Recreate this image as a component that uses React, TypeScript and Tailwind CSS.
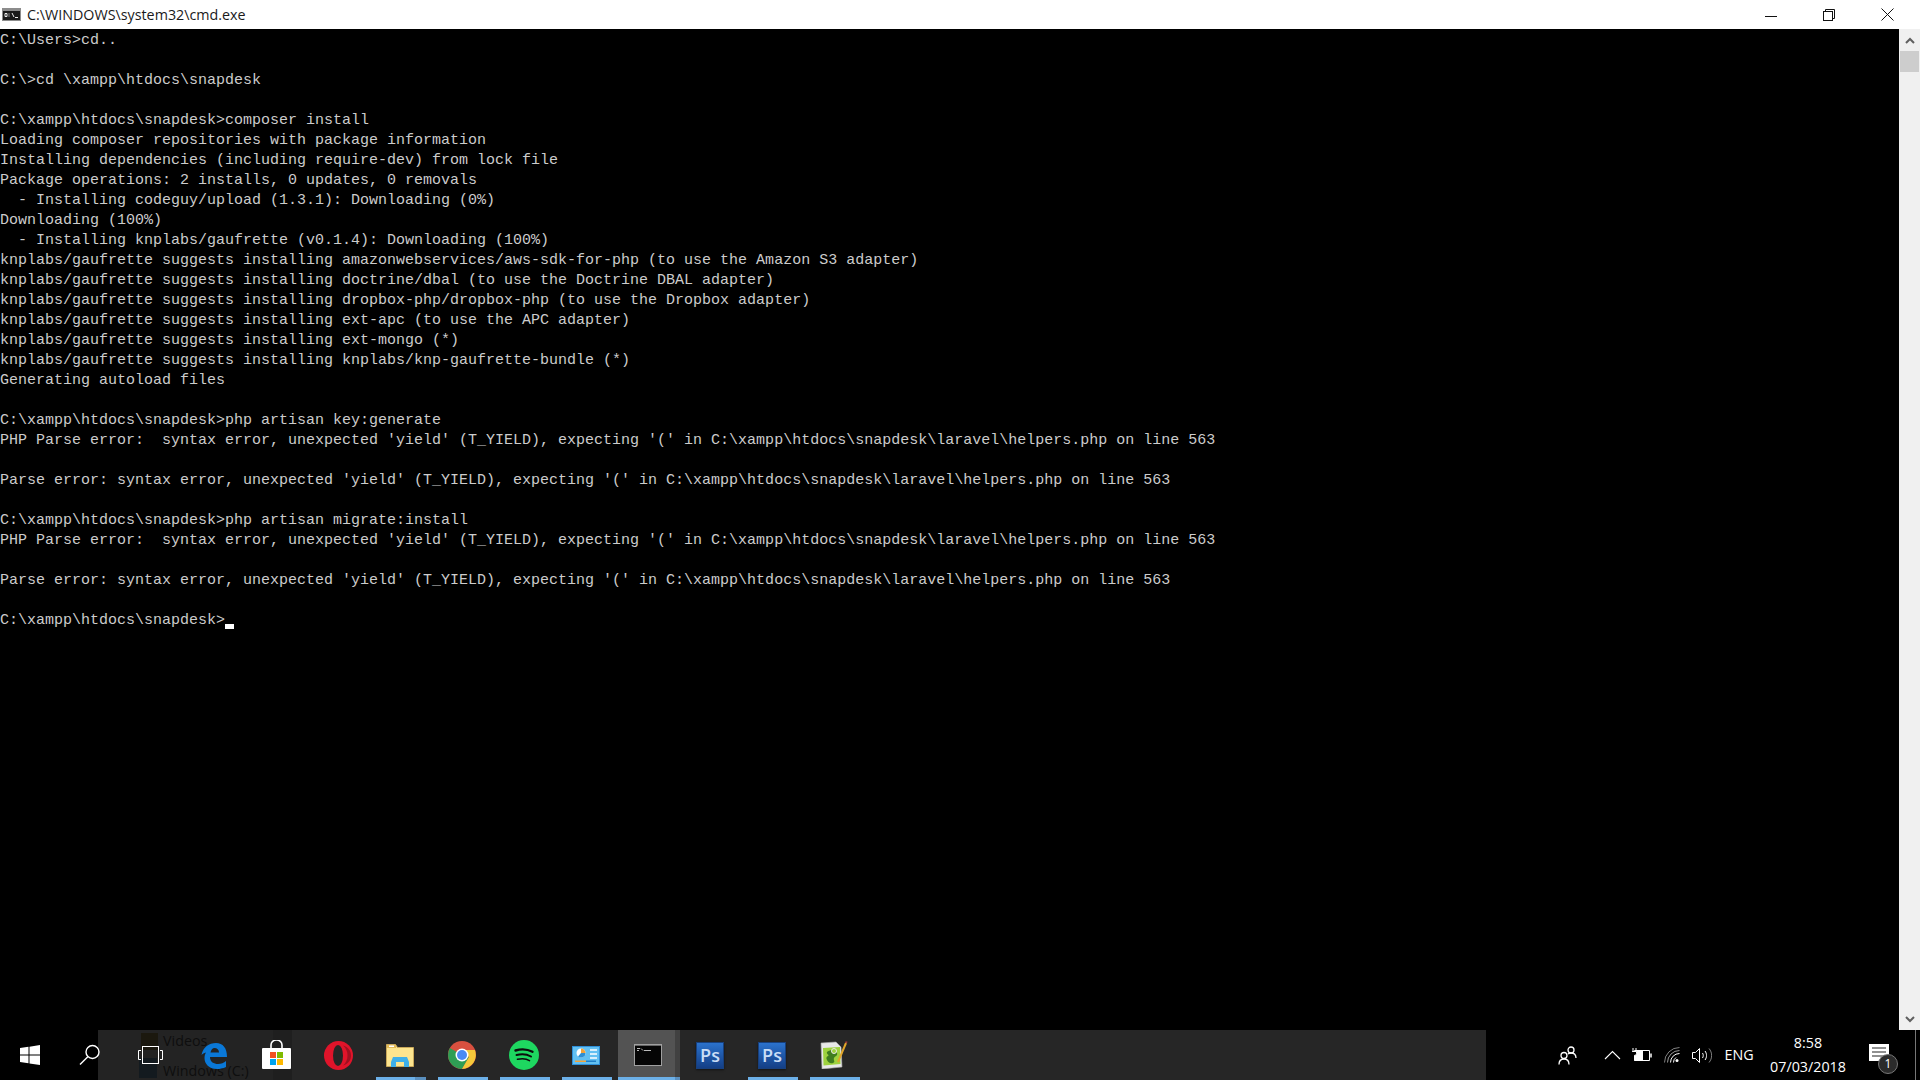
import React from 'react';

const lines = [
  'C:\\Users>cd..',
  '',
  'C:\\>cd \\xampp\\htdocs\\snapdesk',
  '',
  'C:\\xampp\\htdocs\\snapdesk>composer install',
  'Loading composer repositories with package information',
  'Installing dependencies (including require-dev) from lock file',
  'Package operations: 2 installs, 0 updates, 0 removals',
  '  - Installing codeguy/upload (1.3.1): Downloading (0%)',
  'Downloading (100%)',
  '  - Installing knplabs/gaufrette (v0.1.4): Downloading (100%)',
  'knplabs/gaufrette suggests installing amazonwebservices/aws-sdk-for-php (to use the Amazon S3 adapter)',
  'knplabs/gaufrette suggests installing doctrine/dbal (to use the Doctrine DBAL adapter)',
  'knplabs/gaufrette suggests installing dropbox-php/dropbox-php (to use the Dropbox adapter)',
  'knplabs/gaufrette suggests installing ext-apc (to use the APC adapter)',
  'knplabs/gaufrette suggests installing ext-mongo (*)',
  'knplabs/gaufrette suggests installing knplabs/knp-gaufrette-bundle (*)',
  'Generating autoload files',
  '',
  'C:\\xampp\\htdocs\\snapdesk>php artisan key:generate',
  "PHP Parse error:  syntax error, unexpected 'yield' (T_YIELD), expecting '(' in C:\\xampp\\htdocs\\snapdesk\\laravel\\helpers.php on line 563",
  '',
  "Parse error: syntax error, unexpected 'yield' (T_YIELD), expecting '(' in C:\\xampp\\htdocs\\snapdesk\\laravel\\helpers.php on line 563",
  '',
  'C:\\xampp\\htdocs\\snapdesk>php artisan migrate:install',
  "PHP Parse error:  syntax error, unexpected 'yield' (T_YIELD), expecting '(' in C:\\xampp\\htdocs\\snapdesk\\laravel\\helpers.php on line 563",
  '',
  "Parse error: syntax error, unexpected 'yield' (T_YIELD), expecting '(' in C:\\xampp\\htdocs\\snapdesk\\laravel\\helpers.php on line 563",
  '',
];

const CmdGlyph = () => (
  <svg width="19" height="13" viewBox="0 0 19 13">
    <rect width="19" height="13" fill="#8c8c8c" />
    <rect x="1" y="3" width="17" height="9" fill="#1a1a1a" />
    <path d="M3 5.500h2v3H3zM7 5.500v1M7 7.500v1M10 5l2 4M13 9.500h3" fill="none" stroke="#eee" strokeWidth="1" />
  </svg>
);

const TitleBar = () => (
  <div className="flex h-[29px] shrink-0 items-center bg-white">
    <div className="ml-[2px] mr-[6px] flex w-[19px] items-center">
      <CmdGlyph />
    </div>
    <span className="font-['Open_Sans',sans-serif] text-[14.3px] leading-[29px] text-[#1a1a1a]">
      C:\WINDOWS\system32\cmd.exe
    </span>
    <div className="ml-auto flex h-full">
      <div className="flex h-full w-[58px] items-center justify-center">
        <svg width="12" height="12" viewBox="0 0 12 12">
          <path d="M0 7.500h12" stroke="#111" strokeWidth="1" />
        </svg>
      </div>
      <div className="flex h-full w-[58px] items-center justify-center">
        <svg width="12" height="12" viewBox="0 0 12 12" fill="none" stroke="#111">
          <rect x="0.500" y="2.500" width="9" height="9" />
          <path d="M2.500 2.500v-2h9v9h-2" />
        </svg>
      </div>
      <div className="flex h-full w-[62px] items-center justify-center pr-[3px]">
        <svg width="13" height="13" viewBox="0 0 13 13" stroke="#111" strokeWidth="1">
          <path d="M0.500 0.500l12 12M12.500 0.500l-12 12" />
        </svg>
      </div>
    </div>
  </div>
);

const Scrollbar = () => (
  <div className="flex w-[21px] shrink-0 flex-col bg-[#f0f0f0]">
    <div className="flex h-[22px] items-center justify-center">
      <svg width="10" height="7" viewBox="0 0 10 7" fill="none" stroke="#606060" strokeWidth="2">
        <path d="M1 6l4-4 4 4" />
      </svg>
    </div>
    <div className="mx-px h-[21px] bg-[#cdcdcd]" />
    <div className="mt-auto flex h-[21px] items-center justify-center">
      <svg width="10" height="7" viewBox="0 0 10 7" fill="none" stroke="#606060" strokeWidth="2">
        <path d="M1 1l4 4 4-4" />
      </svg>
    </div>
  </div>
);

const Console = () => (
  <div className="flex min-h-0 flex-1 bg-black">
    <div className="min-w-0 flex-1 pt-[2px] font-['Liberation_Mono',monospace] text-[15px] leading-[20px] text-[#cccccc]">
      {lines.map((line, i) => (
        <div key={i} className="h-[20px] whitespace-pre">
          {line}
        </div>
      ))}
      <div className="flex h-[20px] whitespace-pre">
        <span>C:\xampp\htdocs\snapdesk&gt;</span>
        <span className="mt-[13px] h-[5px] w-[9px] bg-white" />
      </div>
    </div>
    <Scrollbar />
  </div>
);

const WindowsLogo = () => (
  <svg width="20" height="20" viewBox="0 0 20 20" fill="#fff">
    <path d="M0 3l8.500-1.200v7.800H0zM9.500 1.700L20 0v9.600H9.500zM0 10.500h8.500v7.700L0 17zM9.500 10.500H20V20L9.500 18.400z" />
  </svg>
);

const SearchIcon = () => (
  <svg width="22" height="22" viewBox="0 0 22 22" fill="none" stroke="#fff" strokeWidth="1.400">
    <circle cx="13.500" cy="8" r="6.500" />
    <path d="M8.800 12.700L1 20.500" />
  </svg>
);

const TaskViewIcon = () => (
  <svg width="25" height="18" viewBox="0 0 25 18" fill="none" stroke="#fff" strokeWidth="1">
    <rect x="4.500" y="0.500" width="16" height="17" />
    <path d="M3 4.500H0.500v9H3M22 4.500h2.500v9H22" />
  </svg>
);

const EdgeIcon = () => (
  <svg width="26" height="27" viewBox="0 0 26 27">
    <path
      fill="#0a78d7"
      fillRule="evenodd"
      d="M0.500 13C2 5 8 1 15 1c7 0 11 5 11 14H9c0 5 4 7 8 7 3 0 6-1 8-3v6c-3 1.500-6 2-9 2-8 0-12.500-5-12.500-11 0-2 .5-4 1.500-5.500-2 .5-3.500 1.500-4.500 2.500zM9.500 10.500H18c0-3-2-4.500-4.500-4.500-2 0-3.500 2-4 4.500z"
    />
  </svg>
);

const StoreIcon = () => (
  <svg width="29" height="30" viewBox="0 0 29 30">
    <path d="M9 8V5a5.500 5 0 0 1 11 0v3" fill="none" stroke="#fff" strokeWidth="1.600" />
    <rect y="8" width="29" height="21" rx="1" fill="#fff" />
    <rect x="8" y="12" width="6" height="6" fill="#f25022" />
    <rect x="15" y="12" width="6" height="6" fill="#7fba00" />
    <rect x="8" y="19" width="6" height="6" fill="#00a4ef" />
    <rect x="15" y="19" width="6" height="6" fill="#ffb900" />
  </svg>
);

const OperaIcon = () => (
  <svg width="29" height="29" viewBox="0 0 29 29">
    <circle cx="14.500" cy="14.500" r="14.500" fill="#e0142a" />
    <ellipse cx="14" cy="14.500" rx="5" ry="10.500" fill="#262626" />
    <path d="M19 4.500c6 2 8 6 8 10s-2 8-8 10c3-2.500 4.500-6 4.500-10S22 7 19 4.500z" fill="#9f1020" />
  </svg>
);

const FolderIcon = () => (
  <svg width="28" height="23" viewBox="0 0 28 23">
    <path d="M0.500 0.500h9l2 3h16v19H0.500z" fill="#fde58f" stroke="#c9a85a" />
    <rect x="1" y="1" width="9" height="3" fill="#e3bb58" />
    <rect x="3" y="1.500" width="5" height="1.500" fill="#fff" />
    <path d="M5 23v-5l2-5h14l2 5v5h-5v-5h-8v5z" fill="#3fb0ea" />
  </svg>
);

const ChromeIcon = () => (
  <svg width="28" height="28" viewBox="0 0 28 28">
    <circle cx="14" cy="14" r="14" fill="#d8503f" />
    <path d="M14 14L1.900 7A14 14 0 0 0 14 28l7-12z" fill="#2f9e54" />
    <path d="M14 9h12.900A14 14 0 0 1 14 28l7-12z" fill="#f5c93a" />
    <circle cx="14" cy="14" r="6.500" fill="#fff" />
    <circle cx="14" cy="14" r="5" fill="#4a8af4" />
  </svg>
);

const SpotifyIcon = () => (
  <svg width="30" height="30" viewBox="0 0 30 30" fill="none" stroke="#0c0c0c" strokeLinecap="round">
    <circle cx="15" cy="15" r="15" fill="#1ed760" stroke="none" />
    <path d="M6.500 10.500c6-1.800 12-1.300 17 1.300" strokeWidth="2.400" />
    <path d="M7.500 15c5-1.300 10.500-.8 14.500 1.500" strokeWidth="2" />
    <path d="M8.500 19.300c4.500-1 9-.6 12 1.300" strokeWidth="1.600" />
  </svg>
);

const ControlPanelIcon = () => (
  <svg width="28" height="19" viewBox="0 0 28 19">
    <rect width="28" height="19" fill="#2f8fd8" />
    <rect x="1" y="1" width="26" height="17" fill="#62c0f2" />
    <circle cx="9" cy="7" r="4.500" fill="#fff" />
    <path d="M9 7V2.500A4.500 4.500 0 0 1 13.500 7z" fill="#f2a33a" />
    <path d="M9 7h4.500A4.500 4.500 0 0 1 6 10.400z" fill="#2d8fd5" />
    <path d="M18 3h7v2h-7zM18 7h7v2h-7zM18 11h7v2h-7z" fill="#d7effc" />
    <rect x="3" y="14.500" width="11" height="1.500" fill="#f2a33a" />
    <rect x="14" y="14.500" width="10" height="1.500" fill="#1f7fc8" />
  </svg>
);

const CmdIcon = () => (
  <svg width="28" height="22" viewBox="0 0 28 22">
    <rect width="28" height="22" fill="#a0a0a0" />
    <rect x="1" y="1" width="26" height="20" fill="#050505" />
    <rect x="1" y="1" width="26" height="1" fill="#666" />
    <path d="M3 4.500h3M3 6.500h2M7 4.500l2 2M10 6.500h7" stroke="#bbb" strokeWidth="1" />
  </svg>
);

const PhotoshopIcon = () => (
  <div className="flex h-[27px] w-[28px] items-center justify-center border border-[#17407e] bg-gradient-to-b from-[#2b72cc] to-[#143f86] font-['Open_Sans',sans-serif] text-[18px] font-semibold leading-none text-[#c9ddf6] shadow-[0_1px_2px_rgba(0,0,0,0.5)]">
    Ps
  </div>
);

const NotepadIcon = () => (
  <svg width="29" height="28" viewBox="0 0 29 28">
    <path d="M1 2l15-1 5 5 1 20-20 2z" fill="#e8e8e8" stroke="#aaa" strokeWidth="0.600" />
    <path d="M3 7l17-1 .5 17-17 1.500z" fill="#9ed23e" />
    <path d="M7 11c3-3 9-2 10 1s-2 3-3 5 2 4-1 5-5-1-6-3-1-3 1-4-2-2-1-4z" fill="#3f7d1f" />
    <circle cx="14" cy="10" r="2.500" fill="#9ed23e" stroke="#e8e8e8" strokeWidth="1" />
    <path d="M18 21l8-19" stroke="#e0a52a" strokeWidth="2" />
    <path d="M26 2l.6-1.500" stroke="#a83b3b" strokeWidth="2" />
  </svg>
);

const apps = [
  { icon: <EdgeIcon /> },
  { icon: <StoreIcon /> },
  { icon: <OperaIcon /> },
  { icon: <FolderIcon />, open: true, stacked: true },
  { icon: <ChromeIcon />, open: true },
  { icon: <SpotifyIcon />, open: true },
  { icon: <ControlPanelIcon />, open: true },
  { icon: <CmdIcon />, open: true, active: true },
  { icon: <PhotoshopIcon /> },
  { icon: <PhotoshopIcon />, open: true },
  { icon: <NotepadIcon />, open: true },
];

const Tray = () => (
  <div className="ml-auto flex h-full items-center text-white">
    <div className="mr-2 flex h-full w-[44px] items-center justify-center">
      <svg width="19" height="19" viewBox="0 0 19 19" fill="none" stroke="#fff" strokeWidth="1.300">
        <circle cx="13" cy="4" r="3" />
        <circle cx="6" cy="9.500" r="3" />
        <path d="M1 18.500c0-3.500 2-5.500 5-5.500s5 2 5 5.500M10 8c1-.8 2-1 3-1 3 0 5 2 5 5" />
      </svg>
    </div>
    <div className="flex h-full w-[30px] items-center justify-center">
      <svg width="17" height="10" viewBox="0 0 17 10" fill="none" stroke="#fff" strokeWidth="1.100">
        <path d="M1 9l7.500-7.500L16 9" />
      </svg>
    </div>
    <div className="flex h-full w-[30px] items-center justify-center">
      <svg width="20" height="14" viewBox="0 0 20 14" fill="none" stroke="#fff" strokeWidth="1">
        <path d="M2.500 2.500h15v10h-15z" />
        <path d="M19 5.500v4" strokeWidth="1.500" />
        <rect x="3" y="3" width="8" height="9" fill="#fff" stroke="none" />
        <path d="M1 0v3M4 0v3M0 3.500h5v2c0 1-1 2-2.500 2v5" stroke="#fff" />
        <path d="M0.500 3.500h4v2c0 1-1 2-2 2" fill="#000" />
      </svg>
    </div>
    <div className="flex h-full w-[30px] items-center justify-center">
      <svg width="16" height="16" viewBox="0 0 16 16" fill="none" stroke="#fff" strokeWidth="1">
        <path d="M0.500 15.500A15 15 0 0 1 15.500 0.500" opacity="0.5" />
        <path d="M3.500 15.500A12 12 0 0 1 15.500 3.500" opacity="0.6" />
        <path d="M6.500 15.500A9 9 0 0 1 15.500 6.500" />
        <path d="M9.500 15.500A6 6 0 0 1 12 10.500" />
        <circle cx="13" cy="13.500" r="1.500" fill="#fff" stroke="none" />
      </svg>
    </div>
    <div className="flex h-full w-[30px] items-center justify-center">
      <svg width="20" height="15" viewBox="0 0 20 15" fill="none" stroke="#fff" strokeWidth="1">
        <path d="M0.500 4.500h3l4-4v14l-4-4h-3z" />
        <path d="M10.500 5c1 1.500 1 3.500 0 5M13 3c2 2.500 2 6.500 0 9" />
        <path d="M17 0.500c3.500 4 3.500 10 0 14" opacity="0.5" />
      </svg>
    </div>
    <div className="flex h-full w-[44px] items-center justify-center font-['Open_Sans',sans-serif] text-[14.3px]">
      ENG
    </div>
    <div className="flex h-full w-[94px] flex-col items-center justify-center font-['Open_Sans',sans-serif] text-[14.3px] leading-[24px]">
      <span>8:58</span>
      <span>07/03/2018</span>
    </div>
    <div className="relative flex h-full w-[48px] items-center justify-center">
      <svg className="mb-[4px]" width="20" height="19" viewBox="0 0 20 19">
        <path d="M0 0h20v17H0z" fill="#fff" />
        <path d="M3 4h14M3 8h14M3 12h14" stroke="#222" strokeWidth="1.200" />
      </svg>
      <span className="absolute left-[23px] top-[24px] flex h-[20px] w-[20px] items-center justify-center rounded-full border border-[#777] bg-[#2b2b2b] font-['Open_Sans',sans-serif] text-[12px]">
        1
      </span>
    </div>
    <div className="ml-3 h-full w-px bg-[#777]" />
    <div className="w-[4px]" />
  </div>
);

const Taskbar = () => (
  <div className="relative flex h-[50px] shrink-0 overflow-hidden bg-black">
    <div className="absolute inset-y-0 left-[98px] w-[175px] bg-[#232323]" />
    <div className="absolute inset-y-0 left-[273px] w-[19px] bg-[#1f1f1f]" />
    <div className="absolute inset-y-0 left-[292px] w-[1194px] bg-[#262626]" />
    <span className="absolute left-[163px] top-[0px] font-['Open_Sans',sans-serif] text-[14.3px] leading-[22px] text-[#0e0e0e]">
      Videos
    </span>
    <span className="absolute left-[163px] top-[30px] font-['Open_Sans',sans-serif] text-[14.3px] leading-[22px] text-[#0e0e0e]">
      Windows (C:)
    </span>
    <div className="absolute left-[141px] top-[3px] h-[17px] w-[17px] bg-[#1b180e]" />
    <div className="absolute left-[139px] top-[28px] h-[20px] w-[18px] bg-[#131a1f]" />

    <div className="relative flex h-full w-[60px] items-center justify-center">
      <WindowsLogo />
    </div>
    <div className="relative flex h-full w-[60px] items-center justify-center">
      <SearchIcon />
    </div>
    <div className="relative flex h-full w-[64px] items-center justify-center pr-[4px]">
      <TaskViewIcon />
    </div>
    {apps.map((app, i) => (
      <div
        key={i}
        className={`relative flex h-full w-[62px] items-center justify-center pr-[2px] ${app.active ? 'bg-[#535353]' : ''}`}
      >
        {app.icon}
        {app.open && (
          <div className={`absolute bottom-0 h-[3px] bg-[#6cb0e8] ${app.active ? 'inset-x-0' : 'inset-x-[6px]'}`} />
        )}
        {app.stacked && <div className="absolute bottom-0 right-[6px] h-[3px] w-[11px] bg-[#5a8fbe]" />}
        {app.active && <div className="absolute inset-y-0 right-0 w-[5px] bg-[#414141]" />}
        {app.active && <div className="absolute bottom-0 right-0 h-[3px] w-[5px] bg-[#5a8fbe]" />}
      </div>
    ))}
    <Tray />
  </div>
);

export default function App() {
  return (
    <div className="flex h-screen w-screen flex-col overflow-hidden bg-black">
      <TitleBar />
      <Console />
      <Taskbar />
    </div>
  );
}
